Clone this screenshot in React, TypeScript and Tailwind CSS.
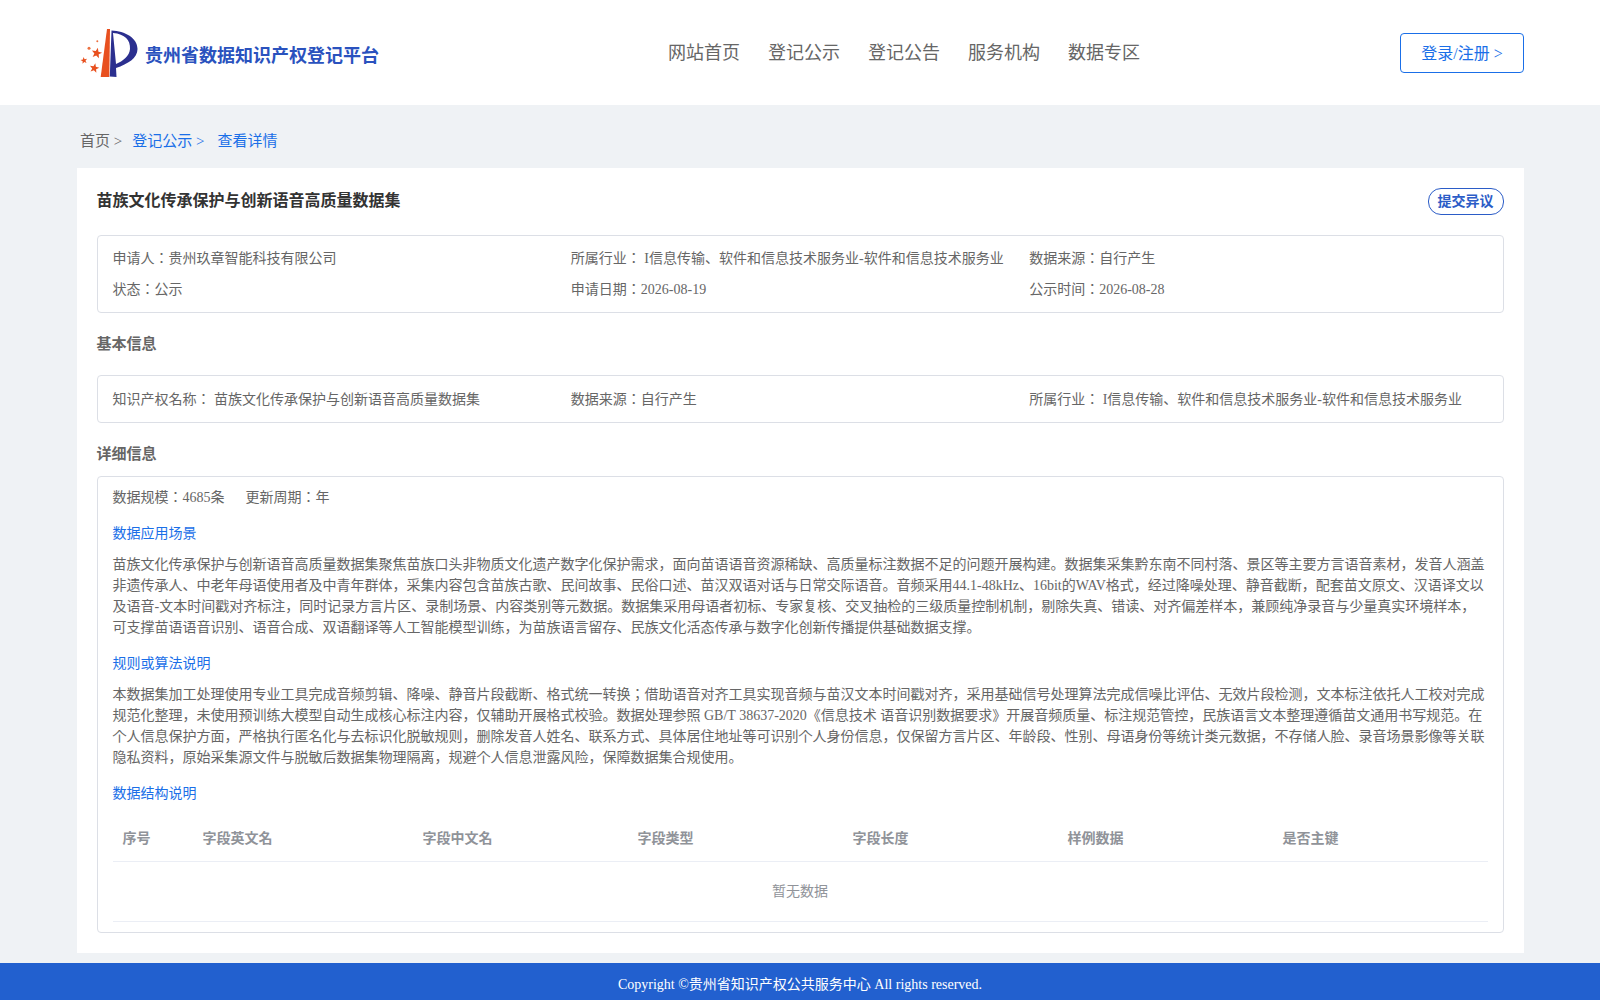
const serif = "font-['Liberation_Serif','Noto_Sans_CJK_JP',serif]";

function star(cx: number, cy: number, r: number, rot = 0) {
  const pts: string[] = [];
  for (let i = 0; i < 10; i++) {
    const rad = i % 2 === 0 ? r : r * 0.42;
    const a = ((-90 + rot + i * 36) * Math.PI) / 180;
    pts.push(`${(cx + rad * Math.cos(a)).toFixed(2)},${(cy + rad * Math.sin(a)).toFixed(2)}`);
  }
  return pts.join(" ");
}

function Logo() {
  return (
    <svg width="60" height="52" viewBox="0 0 60 52" className="shrink-0">
      <polygon points="20.7,50 27,2 30,2 29.3,50" fill="#e8501f" />
      <path
        fillRule="evenodd"
        d="M31.5 3.5 L29.8 49.5 L36.5 50 L36 41 C48 37 57.5 31 57.5 22 C57.5 11 45 4 31.5 3.5 Z M33 6 C45 7 50.5 13 50 22 C49.5 29 43 34 36 37 Z"
        fill="#2b2f8f"
      />
      <polygon points={star(16.7, 26.2, 5.5, 12)} fill="#e8501f" />
      <polygon points={star(4, 33.5, 3.5, -10)} fill="#e8501f" />
      <polygon points={star(14.3, 41.2, 5, 12)} fill="#e8501f" />
      <circle cx="9" cy="21.2" r="1.5" fill="#ec7040" />
      <circle cx="17.3" cy="14.2" r="1" fill="#ec7040" />
    </svg>
  );
}

const nav = ["网站首页", "登记公示", "登记公告", "服务机构", "数据专区"];
const fields = ["字段英文名", "字段中文名", "字段类型", "字段长度", "样例数据", "是否主键"];

export default function App() {
  return (
    <div className={`${serif} min-h-[1000px] bg-[#eff2f5] text-[14px] leading-[21px] text-[#666666]`}>
      <header className="flex h-[105px] items-center bg-white pl-[80px] pr-[76px]">
        <div className="flex w-[588px] items-center gap-[5px]">
          <Logo />
          <span className="pt-[7px] text-[18px] font-bold text-[#2a52be]">贵州省数据知识产权登记平台</span>
        </div>
        <nav className="flex gap-[28px] pt-[1px] text-[18px] text-[#666666]">
          {nav.map((n) => (
            <a key={n}>{n}</a>
          ))}
        </nav>
        <a className="ml-auto flex h-[40px] w-[124px] items-center justify-center rounded-[4px] border border-[#1a6fe8] pt-[2px] text-[16px] text-[#1a6fe8]">
          登录/注册 &gt;
        </a>
      </header>

      <div className="flex h-[63px] items-center pl-[80px] pt-[10px] text-[15px]">
        <span>首页 &gt;</span>
        <span className="ml-[10px] text-[#1a6fe8]">登记公示 &gt;</span>
        <span className="ml-[13px] text-[#1a6fe8]">查看详情</span>
      </div>

      <main className="mx-[76.5px] flex h-[785px] flex-col bg-white px-[20px]">
        <div className="flex h-[67px] items-start justify-between pt-[20px]">
          <h1 className="pt-[1px] text-[16px] font-bold leading-[24px] text-[#333333]">苗族文化传承保护与创新语音高质量数据集</h1>
          <button className="h-[27px] w-[76px] rounded-[13px] border border-[#2b5cc7] text-[14px] font-bold leading-[24px] text-[#2b5cc7]">提交异议</button>
        </div>

        <section className="grid h-[78px] grid-cols-3 content-center gap-y-[10px] rounded-[4px] border border-[#dcdfe6] px-[15px]">
          <div>申请人：贵州玖章智能科技有限公司</div>
          <div className="whitespace-nowrap">所属行业： I信息传输、软件和信息技术服务业-软件和信息技术服务业</div>
          <div>数据来源：自行产生</div>
          <div>状态：公示</div>
          <div>申请日期：2026-08-19</div>
          <div>公示时间：2026-08-28</div>
        </section>

        <h2 className="mt-[20px] text-[15px] font-bold leading-[22px]">基本信息</h2>

        <section className="mt-[20px] grid h-[48px] grid-cols-3 items-center rounded-[4px] border border-[#dcdfe6] px-[15px]">
          <div>知识产权名称： 苗族文化传承保护与创新语音高质量数据集</div>
          <div>数据来源：自行产生</div>
          <div className="whitespace-nowrap">所属行业： I信息传输、软件和信息技术服务业-软件和信息技术服务业</div>
        </section>

        <h2 className="mt-[20px] text-[15px] font-bold leading-[22px]">详细信息</h2>

        <section className="mt-[11px] flex h-[457px] flex-col rounded-[4px] border border-[#dcdfe6] px-[15px] pt-[10px]">
          <div className="flex gap-[21px]">
            <span>数据规模：4685条</span>
            <span>更新周期：年</span>
          </div>
          <h3 className="mt-[15px] text-[#1a6fe8]">数据应用场景</h3>
          <p className="mt-[10px]">
            苗族文化传承保护与创新语音高质量数据集聚焦苗族口头非物质文化遗产数字化保护需求，面向苗语语音资源稀缺、高质量标注数据不足的问题开展构建。数据集采集黔东南不同村落、景区等主要方言语音素材，发音人涵盖非遗传承人、中老年母语使用者及中青年群体，采集内容包含苗族古歌、民间故事、民俗口述、苗汉双语对话与日常交际语音。音频采用44.1-48kHz、16bit的WAV格式，经过降噪处理、静音截断，配套苗文原文、汉语译文以及语音-文本时间戳对齐标注，同时记录方言片区、录制场景、内容类别等元数据。数据集采用母语者初标、专家复核、交叉抽检的三级质量控制机制，剔除失真、错读、对齐偏差样本，兼顾纯净录音与少量真实环境样本，可支撑苗语语音识别、语音合成、双语翻译等人工智能模型训练，为苗族语言留存、民族文化活态传承与数字化创新传播提供基础数据支撑。
          </p>
          <h3 className="mt-[15px] text-[#1a6fe8]">规则或算法说明</h3>
          <p className="mt-[10px]">
            本数据集加工处理使用专业工具完成音频剪辑、降噪、静音片段截断、格式统一转换；借助语音对齐工具实现音频与苗汉文本时间戳对齐，采用基础信号处理算法完成信噪比评估、无效片段检测，文本标注依托人工校对完成规范化整理，未使用预训练大模型自动生成核心标注内容，仅辅助开展格式校验。数据处理参照 GB/T 38637-2020《信息技术 语音识别数据要求》开展音频质量、标注规范管控，民族语言文本整理遵循苗文通用书写规范。在个人信息保护方面，严格执行匿名化与去标识化脱敏规则，删除发音人姓名、联系方式、具体居住地址等可识别个人身份信息，仅保留方言片区、年龄段、性别、母语身份等统计类元数据，不存储人脸、录音场景影像等关联隐私资料，原始采集源文件与脱敏后数据集物理隔离，规避个人信息泄露风险，保障数据集合规使用。
          </p>
          <h3 className="mt-[15px] text-[#1a6fe8]">数据结构说明</h3>
          <div className="mt-[12px] grid grid-cols-[80px_220px_repeat(5,215px)] border-b border-[#ebeef5] text-[#909399]">
            <div className="flex h-[46px] items-center border-b border-[#ebeef5] pl-[10px] font-bold">序号</div>
            {fields.map((f) => (
              <div key={f} className="flex h-[46px] items-center border-b border-[#ebeef5] pl-[10px] font-bold">
                {f}
              </div>
            ))}
            <div className="col-span-full flex h-[59px] items-center justify-center">暂无数据</div>
          </div>
        </section>
      </main>

      <footer className="mt-[10px] flex h-[37px] items-center justify-center bg-[#2260cf] pt-[5px] text-white">
        Copyright ©贵州省知识产权公共服务中心 All rights reserved.
      </footer>
    </div>
  );
}
